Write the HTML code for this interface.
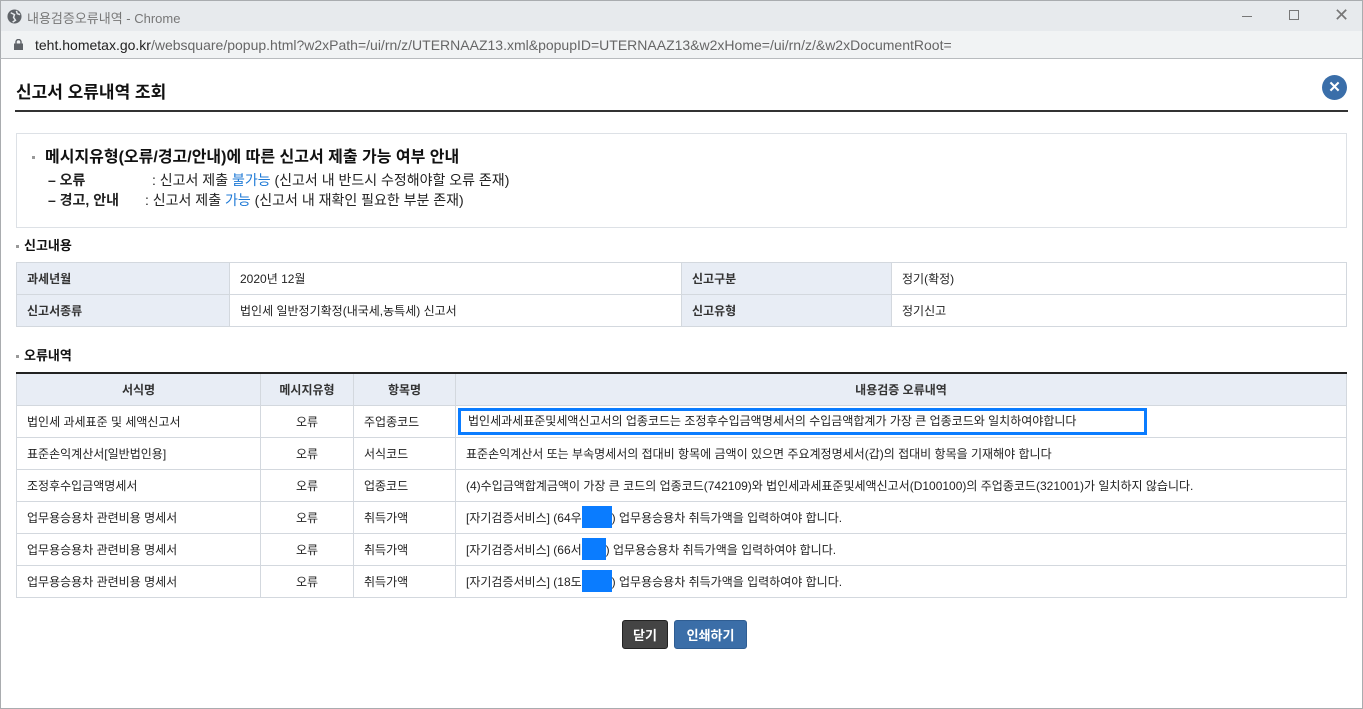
<!DOCTYPE html>
<html><head><meta charset="utf-8"><style>
*{margin:0;padding:0;box-sizing:border-box}
body{width:1363px;height:709px;overflow:hidden;background:#fff;font-family:"Liberation Sans","Noto Sans CJK KR","NanumGothic",sans-serif;position:relative;color:#222}
.abs{position:absolute}
#tb{left:0;top:0;width:1363px;height:31px;background:#e7eaed;border:1px solid #a9acaf;border-bottom:none}
#ab{left:0;top:31px;width:1363px;height:28px;background:#f1f3f4;border-bottom:1px solid #b8bbbe;border-left:1px solid #a9acaf;border-right:1px solid #a9acaf}
#frame{left:0;top:59px;width:1363px;height:650px;border-left:1px solid #a9acaf;border-right:1px solid #a9acaf;border-bottom:1px solid #a9acaf}
table{border-collapse:collapse;position:absolute;font-size:12px}
td,th{border:1px solid #d3d8de;height:32px;padding:0 10px}
th{background:#e8edf5;font-weight:bold;color:#333}
.sec{font-size:13px;font-weight:bold;color:#111}
.sec:before{content:"";display:inline-block;width:3px;height:3px;background:#999;margin-right:5px;vertical-align:middle}
.blue{color:#1f7ad6}
.btn{height:29px;color:#fff;font-weight:bold;font-size:13px;border-radius:3px;text-align:center;line-height:29px}
.bl{background:#0a7cff;display:inline-block;width:30px;height:22px;vertical-align:-6px}
</style></head><body>
<div id="tb" class="abs">
<svg class="abs" style="left:6px;top:8px" width="15" height="15" viewBox="0 0 16 16"><circle cx="8" cy="8" r="7.5" fill="#5f6368"/><path d="M4 4 L8 6 L7 9 L9 12 L6 14 M10 2 L11 5 L14 6" stroke="#e7eaed" stroke-width="1.6" fill="none"/></svg>
<span class="abs" style="left:26px;top:7px;font-size:13px;color:#777">내용검증오류내역 - Chrome</span>
<div class="abs" style="left:1241px;top:15px;width:10px;height:1px;background:#777"></div>
<div class="abs" style="left:1288px;top:9px;width:10px;height:10px;border:1px solid #777"></div>
<span class="abs" style="left:1333px;top:4px;font-size:18px;color:#777">✕</span>
</div>
<div id="ab" class="abs">
<svg class="abs" style="left:13px;top:8px" width="9" height="11" viewBox="0 0 9 11"><rect x="0" y="4.5" width="9" height="6.5" fill="#5f6368"/><path d="M2 5V3a2.5 2.5 0 0 1 5 0v2" stroke="#5f6368" stroke-width="1.4" fill="none"/></svg>
<span class="abs" style="left:34px;top:6px;font-size:14px;color:#222">teht.hometax.go.kr<span style="color:#666">/websquare/popup.html?w2xPath=/ui/rn/z/UTERNAAZ13.xml&amp;popupID=UTERNAAZ13&amp;w2xHome=/ui/rn/z/&amp;w2xDocumentRoot=</span></span>
</div>
<div id="frame" class="abs"></div>
<div class="abs" style="left:16px;top:78px;font-size:17px;font-weight:bold;color:#111">신고서 오류내역 조회</div>
<div class="abs" style="left:1322px;top:75px;width:25px;height:25px;border-radius:50%;background:#3a6ea9;color:#fff;text-align:center;line-height:25px;font-size:15px;font-weight:bold">✕</div>
<div class="abs" style="left:15px;top:110px;width:1333px;height:2px;background:#333"></div>
<div class="abs" style="left:16px;top:133px;width:1331px;height:95px;border:1px solid #dde1e6"></div>
<div class="abs" style="left:32px;top:148px;font-size:16px;line-height:20px;font-weight:bold;color:#111"><span style="display:inline-block;width:3px;height:3px;background:#999;vertical-align:middle;margin-right:10px"></span>메시지유형(오류/경고/안내)에 따른 신고서 제출 가능 여부 안내</div>
<div class="abs" style="left:48px;top:170px;font-size:14px;color:#222"><b style="display:inline-block;width:104px">– 오류</b>: 신고서 제출 <span class="blue">불가능</span> (신고서 내 반드시 수정해야할 오류 존재)</div>
<div class="abs" style="left:48px;top:190px;font-size:14px;color:#222"><b style="display:inline-block;width:97px">– 경고, 안내</b>: 신고서 제출 <span class="blue">가능</span> (신고서 내 재확인 필요한 부분 존재)</div>
<div class="abs sec" style="left:16px;top:235px">신고내용</div>
<table style="left:16px;top:262px;width:1331px;border-top:1px solid #b8c2cf">
<tr><th style="width:213px;text-align:left">과세년월</th><td style="width:452px">2020년 12월</td><th style="width:210px;text-align:left">신고구분</th><td>정기(확정)</td></tr>
<tr><th style="text-align:left">신고서종류</th><td>법인세 일반정기확정(내국세,농특세) 신고서</td><th style="text-align:left">신고유형</th><td>정기신고</td></tr>
</table>
<div class="abs sec" style="left:16px;top:345px">오류내역</div>
<table style="left:16px;top:372px;width:1331px;border-top:2px solid #222">
<tr><th style="width:244px">서식명</th><th style="width:93px">메시지유형</th><th style="width:102px">항목명</th><th>내용검증 오류내역</th></tr>
<tr><td>법인세 과세표준 및 세액신고서</td><td style="text-align:center">오류</td><td>주업종코드</td><td style="padding:0 2px"><div style="border:3px solid #0a7cff;width:689px;height:27px;line-height:21px;padding-left:7px">법인세과세표준및세액신고서의 업종코드는 조정후수입금액명세서의 수입금액합계가 가장 큰 업종코드와 일치하여야합니다</div></td></tr>
<tr><td>표준손익계산서[일반법인용]</td><td style="text-align:center">오류</td><td>서식코드</td><td>표준손익계산서 또는 부속명세서의 접대비 항목에 금액이 있으면 주요계정명세서(갑)의 접대비 항목을 기재해야 합니다</td></tr>
<tr><td>조정후수입금액명세서</td><td style="text-align:center">오류</td><td>업종코드</td><td>(4)수입금액합계금액이 가장 큰 코드의 업종코드(742109)와 법인세과세표준및세액신고서(D100100)의 주업종코드(321001)가 일치하지 않습니다.</td></tr>
<tr><td>업무용승용차 관련비용 명세서</td><td style="text-align:center">오류</td><td>취득가액</td><td>[자기검증서비스] (64우<span class="bl"></span>) 업무용승용차 취득가액을 입력하여야 합니다.</td></tr>
<tr><td>업무용승용차 관련비용 명세서</td><td style="text-align:center">오류</td><td>취득가액</td><td>[자기검증서비스] (66서<span class="bl" style="width:24px"></span>) 업무용승용차 취득가액을 입력하여야 합니다.</td></tr>
<tr><td>업무용승용차 관련비용 명세서</td><td style="text-align:center">오류</td><td>취득가액</td><td>[자기검증서비스] (18도<span class="bl"></span>) 업무용승용차 취득가액을 입력하여야 합니다.</td></tr>
</table>
<div class="abs btn" style="left:622px;top:620px;width:46px;background:#444;border:1px solid #222">닫기</div>
<div class="abs btn" style="left:674px;top:620px;width:73px;background:#3b6ea8;border:1px solid #2f5d92">인쇄하기</div>
</body></html>
